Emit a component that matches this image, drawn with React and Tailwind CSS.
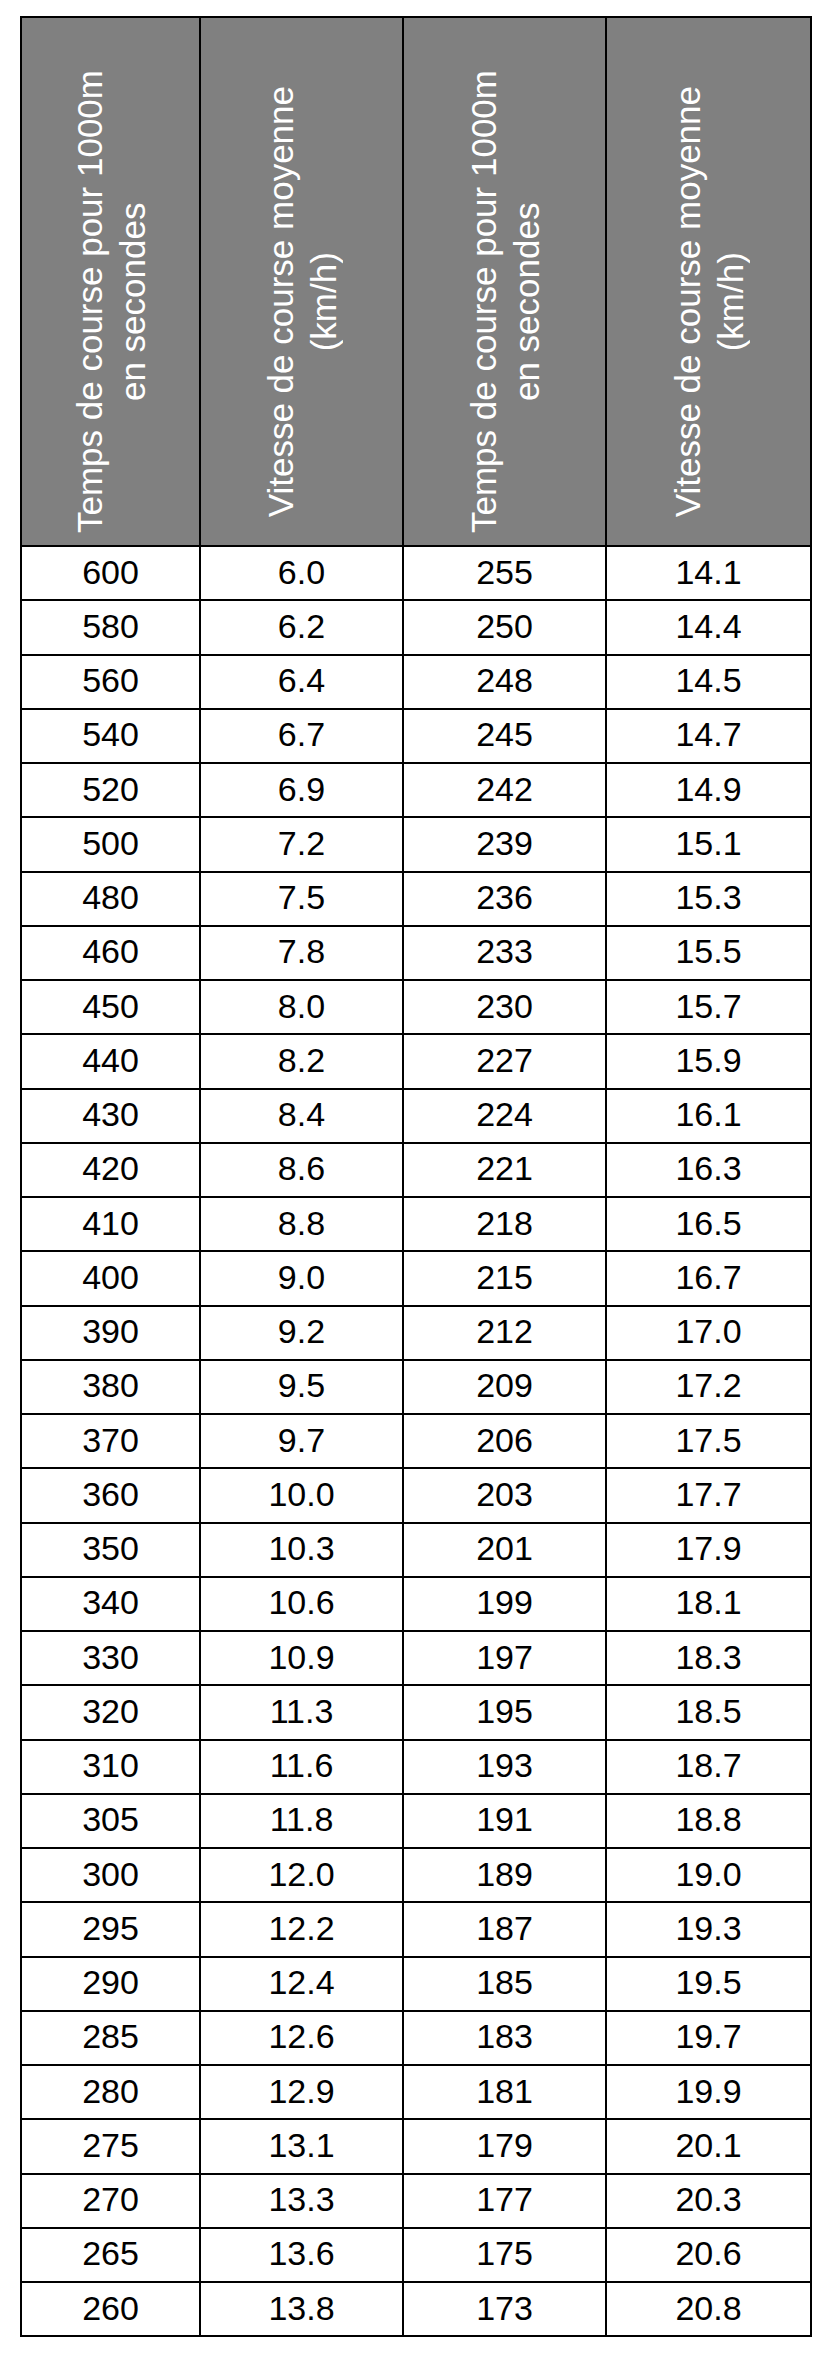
import React from 'react';

const rows = [
  ['600', '6.0', '255', '14.1'],
  ['580', '6.2', '250', '14.4'],
  ['560', '6.4', '248', '14.5'],
  ['540', '6.7', '245', '14.7'],
  ['520', '6.9', '242', '14.9'],
  ['500', '7.2', '239', '15.1'],
  ['480', '7.5', '236', '15.3'],
  ['460', '7.8', '233', '15.5'],
  ['450', '8.0', '230', '15.7'],
  ['440', '8.2', '227', '15.9'],
  ['430', '8.4', '224', '16.1'],
  ['420', '8.6', '221', '16.3'],
  ['410', '8.8', '218', '16.5'],
  ['400', '9.0', '215', '16.7'],
  ['390', '9.2', '212', '17.0'],
  ['380', '9.5', '209', '17.2'],
  ['370', '9.7', '206', '17.5'],
  ['360', '10.0', '203', '17.7'],
  ['350', '10.3', '201', '17.9'],
  ['340', '10.6', '199', '18.1'],
  ['330', '10.9', '197', '18.3'],
  ['320', '11.3', '195', '18.5'],
  ['310', '11.6', '193', '18.7'],
  ['305', '11.8', '191', '18.8'],
  ['300', '12.0', '189', '19.0'],
  ['295', '12.2', '187', '19.3'],
  ['290', '12.4', '185', '19.5'],
  ['285', '12.6', '183', '19.7'],
  ['280', '12.9', '181', '19.9'],
  ['275', '13.1', '179', '20.1'],
  ['270', '13.3', '177', '20.3'],
  ['265', '13.6', '175', '20.6'],
  ['260', '13.8', '173', '20.8'],
];

const HeaderCell = ({ lines }) => (
  <th className="border-2 border-black bg-[#808080] p-0 align-middle">
    <div className="h-[527px] flex items-center justify-center pt-[40px]">
      <span className="[writing-mode:vertical-rl] rotate-180 text-center whitespace-nowrap text-white font-normal text-[35px] leading-[43px]">
        {lines[0]}
        <br />
        {lines[1]}
      </span>
    </div>
  </th>
);

const App = () => {
  return (
    <div className="bg-white min-h-[2354px] w-[830px] pt-[16px] pl-[20px] font-['Liberation_Sans',Arial,sans-serif]">
      <table className="border-collapse table-fixed w-[790px] border-2 border-black">
        <colgroup>
          <col className="w-[179px]" />
          <col className="w-[203px]" />
          <col className="w-[203px]" />
          <col className="w-[205px]" />
        </colgroup>
        <thead>
          <tr>
            <HeaderCell lines={['Temps de course pour 1000m', 'en secondes']} />
            <HeaderCell lines={['Vitesse de course moyenne', '(km/h)']} />
            <HeaderCell lines={['Temps de course pour 1000m', 'en secondes']} />
            <HeaderCell lines={['Vitesse de course moyenne', '(km/h)']} />
          </tr>
        </thead>
        <tbody>
          {rows.map((row, i) => (
            <tr key={i}>
              {row.map((val, j) => (
                <td key={j} className="border-2 border-black h-[54.25px] p-0 text-center align-middle text-[34px] leading-none text-black pb-[3px]">
                  {val}
                </td>
              ))}
            </tr>
          ))}
        </tbody>
      </table>
    </div>
  );
};

export default App;
